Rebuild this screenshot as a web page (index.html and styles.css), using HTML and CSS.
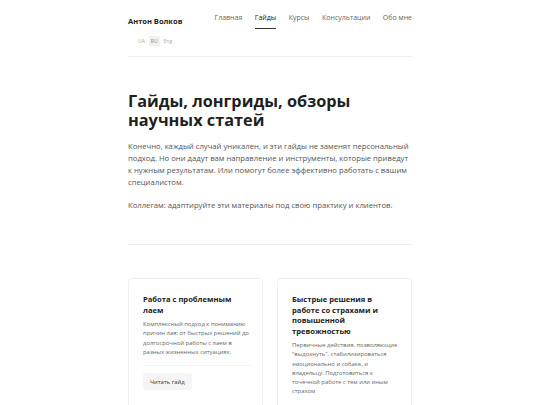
FILE: index.html
```html
<!DOCTYPE html>
<html lang="ru">
<head>
<meta charset="utf-8">
<title>Гайды</title>
<link rel="stylesheet" href="styles.css">
</head>
<body>
<div class="page">
  <header class="header">
    <div class="brand">Антон Волков</div>
    <nav class="nav">
      <a class="nav-link">Главная</a>
      <a class="nav-link active">Гайды</a>
      <a class="nav-link">Курсы</a>
      <a class="nav-link">Консультации</a>
      <a class="nav-link">Обо мне</a>
    </nav>
  </header>
  <div class="langs">
    <span class="lang">UA</span>
    <span class="lang current">RU</span>
    <span class="lang">Eng</span>
  </div>
  <hr class="sep">
  <section class="intro">
    <h1 class="title">Гайды, лонгриды, обзоры научных статей</h1>
    <p class="lead">Конечно, каждый случай уникален, и эти гайды не заменят персональный подход. Но они дадут вам направление и инструменты, которые приведут к нужным результатам. Или помогут более эффективно работать с вашим специалистом.</p>
    <p class="lead">Коллегам: адаптируйте эти материалы под свою практику и клиентов.</p>
  </section>
  <hr class="sep">
  <section class="cards">
    <article class="card">
      <h2 class="card-title">Работа с проблемным лаем</h2>
      <p class="card-text">Комплексный подход к пониманию причин лая: от быстрых решений до долгосрочной работы с лаем в разных жизненных ситуациях.</p>
      <hr class="card-sep">
      <a class="btn">Читать гайд</a>
    </article>
    <article class="card">
      <h2 class="card-title">Быстрые решения в работе со страхами и повышенной тревожностью</h2>
      <p class="card-text">Первичные действия, позволяющие "выдохнуть", стабилизироваться эмоционально и собаке, и владельцу. Подготовиться к точечной работе с тем или иным страхом</p>
      <hr class="card-sep">
      <a class="btn">Читать гайд</a>
    </article>
  </section>
</div>
</body>
</html>
```

FILE: styles.css
```css
* { box-sizing: border-box; }
html, body { margin: 0; padding: 0; background: #fff; }
body {
  font-family: "Open Sans", "Noto Sans", sans-serif;
  color: #222;
}
.page {
  width: 284px;
  margin: 0 auto;
  padding-top: 12px;
}
.header {
  display: flex;
  justify-content: space-between;
  align-items: center;
}
.brand {
  font-size: 7.5px;
  font-weight: 700;
  color: #222;
  line-height: 12px;
}
.nav {
  display: flex;
  gap: 12.5px;
}
.nav-link {
  font-size: 7px;
  color: #666;
  line-height: 12px;
  padding-bottom: 4px;
  border-bottom: 1px solid transparent;
}
.nav-link.active {
  color: #222;
  border-bottom-color: #333;
}
.langs {
  display: flex;
  gap: 2px;
  margin-top: 7px;
  padding-left: 8px;
}
.lang {
  font-size: 5px;
  color: #aaa;
  padding: 2px 2px;
  line-height: 6px;
  border-radius: 1px;
}
.lang.current {
  background: #f0f0f0;
  color: #888;
}
.sep {
  border: 0;
  border-top: 1px solid #eee;
  margin: 10px 0 0;
}
.intro {
  padding: 35px 0 12px;
}
.title {
  font-size: 16.3px;
  font-weight: 700;
  line-height: 18.5px;
  margin: 0 0 11px;
  color: #1f1f1f;
}
.lead {
  font-size: 7.7px;
  line-height: 12px;
  color: #555;
  margin: 0 0 11px;
}
.lead + .lead {
  margin-top: 11px;
}
.cards {
  display: grid;
  grid-template-columns: 1fr 1fr;
  gap: 14px;
  margin-top: 33px;
}
.card {
  display: flex;
  flex-direction: column;
  align-items: flex-start;
  border: 1px solid #efefef;
  border-radius: 4px;
  padding: 15px 11px 14px 14px;
  background: #fff;
  box-shadow: 0 1px 2px rgba(0,0,0,0.02);
}
.card-title {
  font-size: 7.6px;
  font-weight: 700;
  line-height: 10.5px;
  margin: 0 0 5px;
  color: #222;
}
.card-text {
  font-size: 5.9px;
  line-height: 9.3px;
  color: #666;
  margin: 0;
}
.card-sep {
  align-self: stretch;
  border: 0;
  border-top: 1px solid #f3f3f3;
  margin: 8px 0 7px;
}
.btn {
  display: block;
  font-size: 5.9px;
  color: #333;
  background: #f5f5f5;
  padding: 4.5px 7px;
  line-height: 8px;
  border-radius: 2px;
}
```
